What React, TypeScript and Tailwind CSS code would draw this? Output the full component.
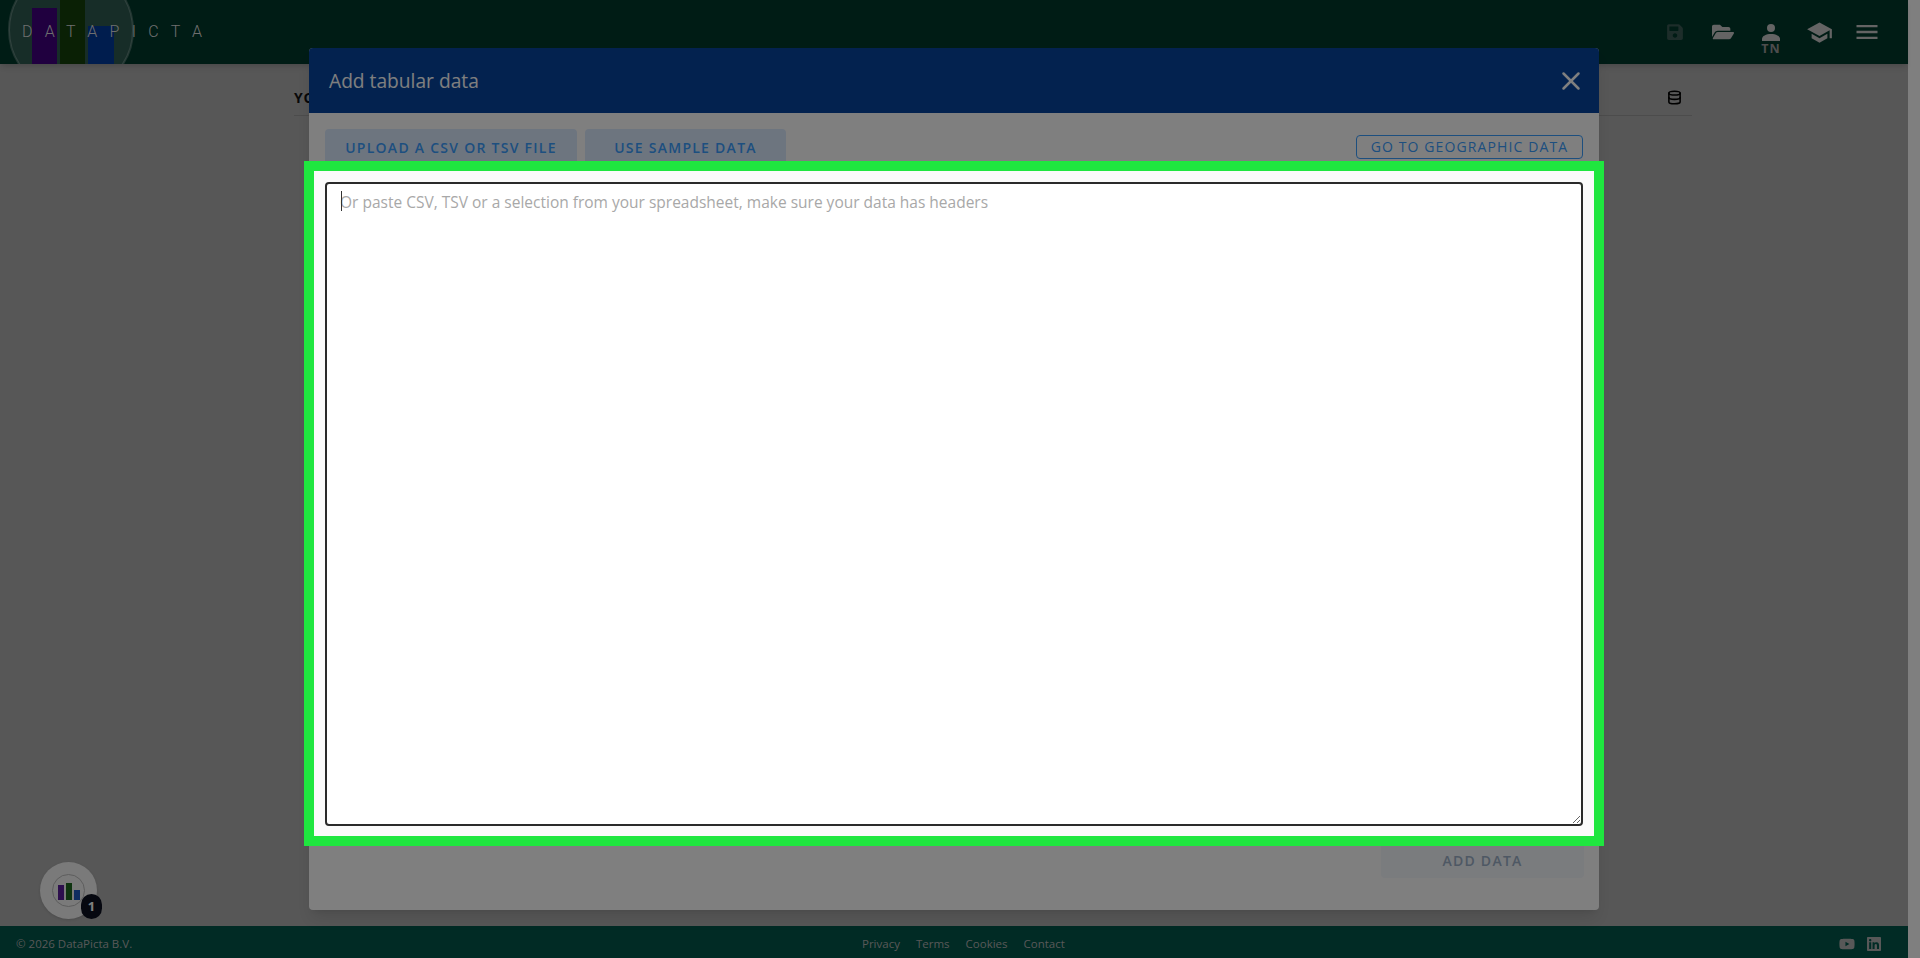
import React from "react";
import { Database, X } from "lucide-react";
import { FaSave, FaFolderOpen, FaYoutube, FaLinkedin } from "react-icons/fa";
import { MdSchool, MdMenu } from "react-icons/md";

function Logo() {
  return (
    <div className="relative w-[220px] h-16 overflow-hidden shrink-0">
      <svg width="140" height="64" viewBox="0 0 140 64" className="absolute left-0 top-0">
        <circle cx="71" cy="30" r="62" fill="#ffffff" fillOpacity="0.18" stroke="#ffffff" strokeOpacity="0.25" strokeWidth="2" />
        <rect x="32" y="8" width="25" height="56" fill="#40007f" />
        <rect x="60" y="0" width="25" height="64" fill="#14400a" />
        <rect x="88" y="26" width="26" height="38" fill="#003a9c" />
      </svg>
      <span className="absolute left-[22px] top-[22px] text-[16px] leading-5 tracking-[0.77em] text-[#dddddd] font-['Roboto',sans-serif] font-light">
        DATAPICTA
      </span>
    </div>
  );
}

function UserIcon() {
  return (
    <svg width="18" height="17" viewBox="0 0 18 17" fill="currentColor">
      <circle cx="9" cy="4" r="4" />
      <path d="M0 17v-2c0-3 4-5 9-5s9 2 9 5v2z" />
    </svg>
  );
}

export default function App() {
  return (
    <div className="relative h-[958px] w-[1920px] overflow-hidden bg-white font-['Open_Sans',sans-serif]">
      {/* Page */}
      <div className="flex flex-col h-full w-[1908px] bg-[#aeaeae]">
        <header className="h-16 shrink-0 bg-[#00382b] flex items-center shadow-md">
          <Logo />
          <div className="ml-auto flex items-center pr-[17px] text-[#c8c8c8]">
            <div className="w-12 flex justify-center">
              <FaSave size={18} className="text-[#3a5a54]" />
            </div>
            <div className="w-12 flex justify-center">
              <FaFolderOpen size={22} />
            </div>
            <div className="w-12 flex flex-col items-center pt-[14px] leading-none">
              <UserIcon />
              <span className="text-[12.5px] leading-[12px] mt-[2px] font-bold tracking-[0.08em] text-[#9a9a9a]">TN</span>
            </div>
            <div className="w-12 flex justify-center">
              <MdSchool size={27} />
            </div>
            <div className="w-12 flex justify-center">
              <MdMenu size={28} />
            </div>
          </div>
        </header>

        <main className="flex-1 min-h-0 px-[294px] pt-[24px]">
          <div className="flex items-center justify-between h-[28px] pb-[9px] border-b border-[#999999] w-[1398px]">
            <span className="text-[14px] font-bold tracking-wider text-[#111111]">YOUR DATA</span>
            <Database size={15} strokeWidth={2.5} className="mr-[10px] text-black" />
          </div>
        </main>

        <footer className="h-8 shrink-0 bg-[#02564a] flex items-center pl-4 pr-[26px] pt-[4px] text-[11.5px] text-[#b0b0b0]">
          <span className="w-[846px]">© 2026 DataPicta B.V.</span>
          <div className="flex items-center gap-4">
            <span>Privacy</span>
            <span>Terms</span>
            <span>Cookies</span>
            <span>Contact</span>
          </div>
          <div className="ml-auto flex items-center gap-[11px]">
            <FaYoutube size={16} />
            <FaLinkedin size={16} />
          </div>
        </footer>
      </div>

      {/* Chart launcher */}
      <div className="absolute left-[40px] top-[862px] w-[57px] h-[57px] rounded-full bg-[#f4f4f4] flex items-center justify-center shadow">
        <div className="w-[33px] h-[33px] rounded-full border border-[#bbbbbb] flex items-end justify-center gap-[2px] pb-[6px]">
          <span className="w-[6px] h-[15px] bg-[#5a1f9a]" />
          <span className="w-[6px] h-[17px] bg-[#1f6a20]" />
          <span className="w-[6px] h-[10px] bg-[#1f5ac0]" />
        </div>
      </div>
      <div className="absolute left-[81px] top-[894px] w-[21px] h-[25px] rounded-full bg-[#0c1020] text-white text-[13px] font-bold flex items-center justify-center">
        1
      </div>

      {/* Modal */}
      <div className="absolute left-[309px] top-[48px] w-[1290px] h-[862px] rounded bg-white shadow-lg flex flex-col overflow-hidden">
        <div className="h-[65px] shrink-0 bg-[#06459f] flex items-center justify-between pl-[20px] pr-[13px] pt-[2px]">
          <h2 className="text-[19.2px] text-white">Add tabular data</h2>
          <X size={30} className="text-white mb-[2px]" strokeWidth={2} />
        </div>
        <div className="flex items-start justify-between px-4 pt-4">
          <div className="flex gap-2">
            <button className="h-9 w-[252px] rounded bg-[#dbeafe] text-[14px] font-semibold tracking-[0.09em] text-[#3b9eff]">
              UPLOAD A CSV OR TSV FILE
            </button>
            <button className="h-9 w-[201px] rounded bg-[#dbeafe] text-[14px] font-semibold tracking-[0.09em] text-[#3b9eff]">
              USE SAMPLE DATA
            </button>
          </div>
          <button className="mt-[6px] h-[24px] w-[227px] rounded border border-[#3b9eff] text-[14px] font-medium tracking-[0.08em] text-[#3b9eff] leading-none">
            GO TO GEOGRAPHIC DATA
          </button>
        </div>
        <div className="mt-auto flex justify-end pr-[15px] pb-[32px]">
          <button className="h-[36px] w-[203px] rounded bg-[#f4f8fc] text-[14px] font-semibold tracking-[0.09em] text-[#9db0c8]">
            ADD DATA
          </button>
        </div>
      </div>

      {/* Dim */}
      <div className="absolute inset-0 bg-black/50" />

      {/* Highlighted field */}
      <div className="absolute left-[304px] top-[161px] w-[1300px] h-[685px] border-[10px] border-[#1fe63f] bg-[#fafafa] pl-[11px] pr-[11px] pt-[11px] pb-[10px]">
        <div className="relative w-full h-full">
          <textarea
            className="block w-full h-full rounded-[4px] border-2 border-[#2a2a2a] bg-white px-[13px] py-[6px] text-[15.5px] leading-6 text-black placeholder:text-[#a8a8a8] outline-none"
            placeholder="Or paste CSV, TSV or a selection from your spreadsheet, make sure your data has headers"
          />
          <span className="absolute left-[16px] top-[9px] w-px h-[20px] bg-[#333333]" />
        </div>
      </div>
    </div>
  );
}
